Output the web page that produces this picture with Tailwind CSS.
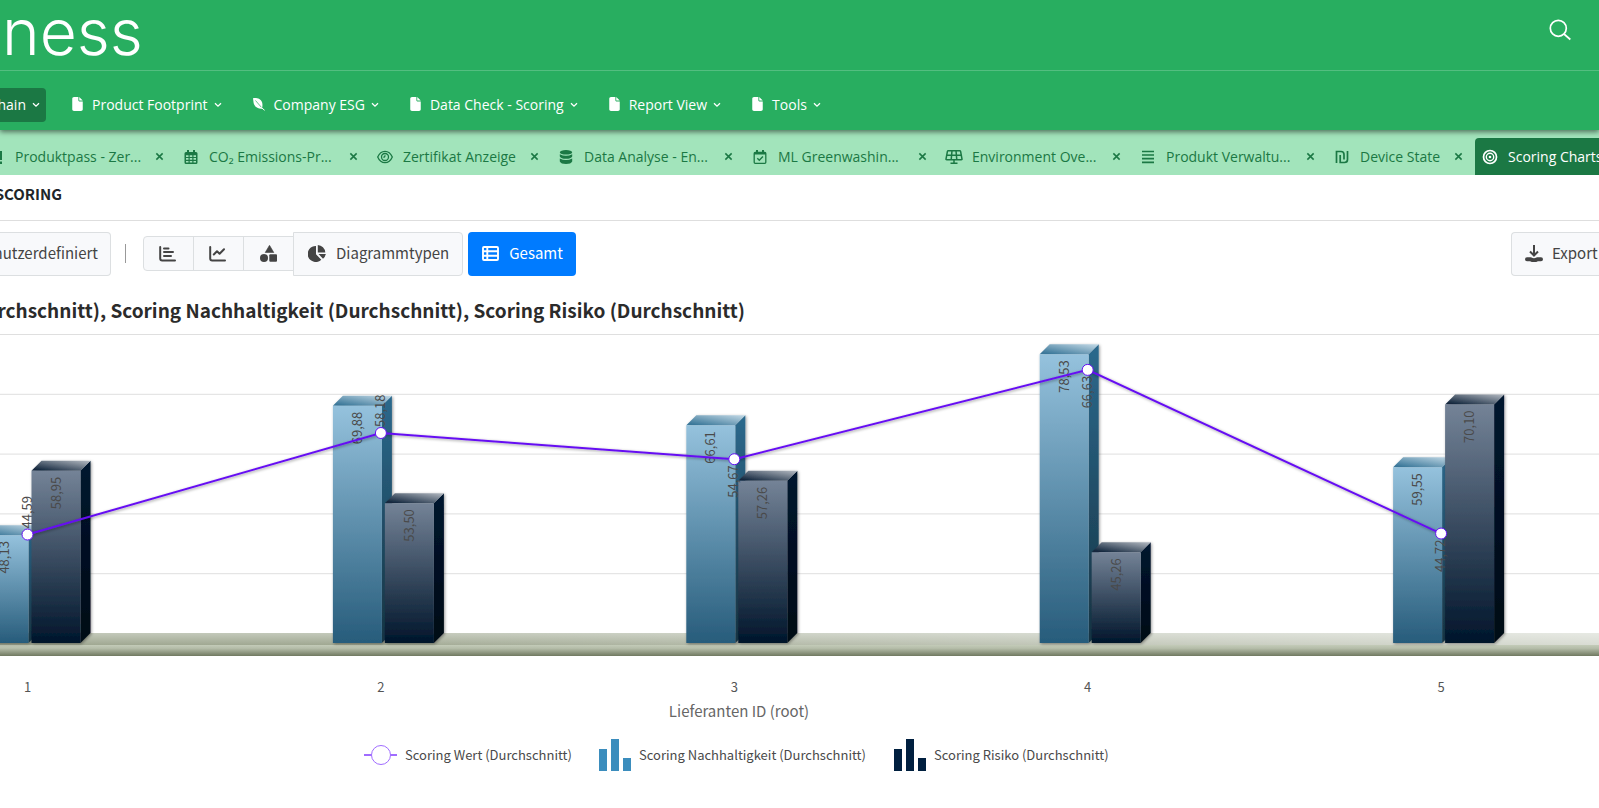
<!DOCTYPE html>
<html lang="de">
  <head>
    <meta charset="UTF-8" />
    <meta name="viewport" content="width=device-width, initial-scale=1.0" />
    <title>Scoring Charts</title>
    <script src="https://cdn.jsdelivr.net/npm/@tailwindcss/browser@4"></script>
  </head>

  <body class="bg-white overflow-x-hidden font-['Noto_Sans_CJK_SC',sans-serif] text-[#444]">
    <!-- Shared icons -->
    <svg class="hidden" aria-hidden="true">
      <symbol id="icon-file" viewBox="0 0 384 512">
        <path d="M0 64C0 29 29 0 64 0h160v128c0 18 14 32 32 32h128v288c0 35-29 64-64 64H64c-35 0-64-29-64-64zM256 0l128 128H256z" />
      </symbol>
      <symbol id="icon-chevron" viewBox="0 0 8 6">
        <path d="M1 1.2l3 3 3-3" fill="none" stroke="currentColor" stroke-width="1.3" />
      </symbol>
      <symbol id="icon-close" viewBox="0 0 10 10">
        <path d="M1.5 1.5l7 7m0-7l-7 7" fill="none" stroke="currentColor" stroke-width="1.7" />
      </symbol>
    </svg>

    <header class="relative z-10 bg-[#28ae60] text-white shadow-[0_2px_5px_rgba(0,0,0,0.5)]">
      <div class="flex items-center justify-between h-[71px] pl-[2px] pr-7 border-b border-[#53be80]">
        <span class="font-['Inter',sans-serif] font-light text-[64px] leading-[64px] pb-[6px]">ness</span>
        <button type="button" aria-label="Suche" class="mb-[10px]">
          <svg class="w-[22px] h-[22px]" viewBox="0 0 22 22" fill="none" stroke="currentColor" stroke-width="1.7">
            <circle cx="9.3" cy="9.3" r="8" />
            <path d="M15 15l6.3 5.5" />
          </svg>
        </button>
      </div>

      <nav class="flex items-center h-[59px] pt-[9px] font-['Open_Sans',sans-serif] text-[14px] leading-5">
        <button type="button" class="flex items-center justify-end gap-[6px] w-[46px] h-[34px] pr-[6px] rounded-r bg-[#1b7844] overflow-hidden">
          Chain
          <svg class="w-2 h-[6px] shrink-0"><use href="#icon-chevron" /></svg>
        </button>
        <button type="button" class="flex items-center ml-[26px]">
          <svg class="w-[11px] h-[14px] mr-[9px] mb-[2px]" fill="currentColor"><use href="#icon-file" /></svg>
          Product Footprint
          <svg class="w-2 h-[6px] ml-[6px]"><use href="#icon-chevron" /></svg>
        </button>
        <button type="button" class="flex items-center ml-[31px]">
          <svg class="w-[12px] h-[13px] mr-[9px] mb-[2px]" viewBox="0 0 12 13">
            <path d="M0 .2c4-.4 8 .4 9.200 4.600.5 2 .2 4.200-.2 6C4.500 10.900 1.200 8.500.6 4.800.4 3.200.2 1.600 0 .2z" fill="currentColor" />
            <path d="M2.500 2.500L9 10" stroke="#28ae60" stroke-width=".7" fill="none" />
            <path d="M8 9.300l3.600 3" stroke="currentColor" stroke-width="1" />
          </svg>
          Company ESG
          <svg class="w-2 h-[6px] ml-[6px]"><use href="#icon-chevron" /></svg>
        </button>
        <button type="button" class="flex items-center ml-[31px]">
          <svg class="w-[11px] h-[14px] mr-[9px] mb-[2px]" fill="currentColor"><use href="#icon-file" /></svg>
          Data Check - Scoring
          <svg class="w-2 h-[6px] ml-[6px]"><use href="#icon-chevron" /></svg>
        </button>
        <button type="button" class="flex items-center ml-[31px]">
          <svg class="w-[11px] h-[14px] mr-[9px] mb-[2px]" fill="currentColor"><use href="#icon-file" /></svg>
          Report View
          <svg class="w-2 h-[6px] ml-[6px]"><use href="#icon-chevron" /></svg>
        </button>
        <button type="button" class="flex items-center ml-[31px]">
          <svg class="w-[11px] h-[14px] mr-[9px] mb-[2px]" fill="currentColor"><use href="#icon-file" /></svg>
          Tools
          <svg class="w-2 h-[6px] ml-[6px]"><use href="#icon-chevron" /></svg>
        </button>
      </nav>
    </header>

    <!-- Open tabs -->
    <div class="flex items-end h-[45px] overflow-hidden bg-[#a2e4bb] text-[#1b7844] font-['Open_Sans',sans-serif] text-[14px] leading-5 whitespace-nowrap">
      <div class="flex items-center shrink-0 h-[37px] pr-3 -ml-[12px]">
        <svg class="w-[18px] h-[14px] mr-[9px]" viewBox="0 0 18 14"><path d="M3 1h11v9H3zM3 11.500h11V14H3z" fill="currentColor" /></svg>
        <span class="w-[125px]">Produktpass - Zer...</span>
        <button type="button" aria-label="Schließen" class="ml-[15px]"><svg class="w-[9px] h-[9px]"><use href="#icon-close" /></svg></button>
      </div>
      <div class="flex items-center shrink-0 h-[37px] pl-[6px] pr-3">
        <svg class="w-[18px] h-[14px] mr-[9px]" viewBox="0 0 18 14">
          <path d="M5 0h2v2h4V0h2v2h1q1.500 0 1.500 1.500V12.500Q15.500 14 14 14H4Q2.500 14 2.500 12.500V3.500Q2.500 2 4 2h1z" fill="currentColor" />
          <path d="M4 5.300h2.500v1.700H4zM7.700 5.300h2.600v1.700H7.700zM11.500 5.300H14v1.700h-2.500zM4 8.100h2.500v1.700H4zM7.700 8.100h2.600v1.700H7.700zM11.500 8.100H14v1.700h-2.500zM4 10.900h2.500v1.600H4zM7.700 10.900h2.600v1.600H7.700zM11.500 10.900H14v1.600h-2.500z" fill="#a2e4bb" />
        </svg>
        <span class="w-[125px]">CO₂ Emissions-Pr...</span>
        <button type="button" aria-label="Schließen" class="ml-[15px]"><svg class="w-[9px] h-[9px]"><use href="#icon-close" /></svg></button>
      </div>
      <div class="flex items-center shrink-0 h-[37px] pl-[6px] pr-3">
        <svg class="w-[18px] h-[14px] mr-[9px]" viewBox="0 0 18 14" fill="none" stroke="currentColor" stroke-width="1.300">
          <path d="M1.700 7C3.300 3.300 6 1.300 9 1.300S14.700 3.300 16.300 7C14.700 10.700 12 12.700 9 12.700S3.300 10.700 1.700 7z" />
          <circle cx="9" cy="7" r="3.500" />
          <path d="M7.300 7.200Q9 7.300 9 5.300" />
        </svg>
        <span>Zertifikat Anzeige</span>
        <button type="button" aria-label="Schließen" class="ml-[14px]"><svg class="w-[9px] h-[9px]"><use href="#icon-close" /></svg></button>
      </div>
      <div class="flex items-center shrink-0 h-[37px] pl-[6px] pr-3">
        <svg class="w-[18px] h-[14px] mr-[9px]" viewBox="0 0 18 14" fill="currentColor">
          <ellipse cx="9" cy="2.300" rx="6.200" ry="2.300" />
          <path d="M2.800 4.200Q9 7.200 15.200 4.200V6.500Q14 8.800 9 8.800T2.800 6.500zM2.800 8.500Q9 11.500 15.200 8.500V11.500Q14 14 9 14T2.800 11.500z" />
        </svg>
        <span class="w-[125px]">Data Analyse - En...</span>
        <button type="button" aria-label="Schließen" class="ml-[15px]"><svg class="w-[9px] h-[9px]"><use href="#icon-close" /></svg></button>
      </div>
      <div class="flex items-center shrink-0 h-[37px] pl-[6px] pr-3">
        <svg class="w-[18px] h-[14px] mr-[9px]" viewBox="0 0 18 14" fill="none" stroke="currentColor">
          <rect x="3.200" y="2.500" width="11.600" height="10.800" rx="1" stroke-width="1.300" />
          <path d="M3 3.500h12M6 0v3M12 0v3" stroke-width="2" />
          <path d="M6.300 8.300l2 2 3.600-3.800" stroke-width="1.400" />
        </svg>
        <span class="w-[125px]">ML Greenwashin...</span>
        <button type="button" aria-label="Schließen" class="ml-[15px]"><svg class="w-[9px] h-[9px]"><use href="#icon-close" /></svg></button>
      </div>
      <div class="flex items-center shrink-0 h-[37px] pl-[6px] pr-3">
        <svg class="w-[18px] h-[14px] mr-[9px]" viewBox="0 0 18 14" fill="none" stroke="currentColor" stroke-width="1.500">
          <path d="M3.200.8h11.600q.6 0 .8.6l1.400 7.600q.1.800-.7.800H1.700q-.8 0-.7-.8L2.400 1.400q.2-.6.800-.6zM1.700 5.200h14.600M7 .8L6.200 9.800M11 .8l.8 9M9 10v3M5.500 13.300h7" />
        </svg>
        <span class="w-[125px]">Environment Ove...</span>
        <button type="button" aria-label="Schließen" class="ml-[15px]"><svg class="w-[9px] h-[9px]"><use href="#icon-close" /></svg></button>
      </div>
      <div class="flex items-center shrink-0 h-[37px] pl-[6px] pr-3">
        <svg class="w-[18px] h-[14px] mr-[9px]" viewBox="0 0 18 14" stroke="currentColor" stroke-width="1.700">
          <path d="M3 1.500h12M3 5h12M3 8.700h12M3 12.300h12" />
        </svg>
        <span class="w-[125px]">Produkt Verwaltu...</span>
        <button type="button" aria-label="Schließen" class="ml-[15px]"><svg class="w-[9px] h-[9px]"><use href="#icon-close" /></svg></button>
      </div>
      <div class="flex items-center shrink-0 h-[37px] pl-[6px] pr-3">
        <svg class="w-[18px] h-[14px] mr-[9px]" viewBox="0 0 18 14" fill="none" stroke="currentColor" stroke-width="1.700">
          <path d="M3.500 13V1.500H8q3 0 3 3V9.500M7.200 5v7.500H11.500q3 0 3-3V1" />
        </svg>
        <span>Device State</span>
        <button type="button" aria-label="Schließen" class="ml-[14px]"><svg class="w-[9px] h-[9px]"><use href="#icon-close" /></svg></button>
      </div>
      <div class="flex items-center shrink-0 h-[37px] pl-[6px] pr-3 rounded-t-[4px] bg-[#1b7844] text-white">
        <svg class="w-[18px] h-[16px] mr-[9px]" viewBox="0 0 18 16" fill="none" stroke="currentColor">
          <circle cx="9" cy="8" r="6.500" stroke-width="1.700" />
          <circle cx="9" cy="8" r="3.700" stroke-width="1.400" />
          <circle cx="9" cy="8" r="1.300" fill="currentColor" stroke="none" />
        </svg>
        <span>Scoring Charts</span>
      </div>
    </div>

    <main>
      <h1 class="h-[46px] pt-[9px] border-b border-[#dedede] text-[15px] leading-5 font-bold text-[#212529]">
        <span class="flex justify-end w-[62px] overflow-hidden">SCORING</span>
      </h1>

      <!-- Toolbar -->
      <div class="flex items-center h-[66px] pb-px text-[15px] leading-6 whitespace-nowrap">
        <button type="button" class="flex items-center justify-end w-[111px] h-[44px] pr-3 pb-px rounded-r border border-l-0 border-[#dcdfe1] bg-[#f8f9fb] overflow-hidden">Benutzerdefiniert</button>
        <div class="w-px h-[19px] ml-[14px] mr-[17px] bg-[#999]"></div>
        <button type="button" aria-label="Balkendiagramm" class="flex items-center justify-center w-[51px] h-[35px] pr-[2px] rounded-l border border-[#dcdfe1] bg-[#f8f9fb]">
          <svg class="w-[17px] h-[16px]" viewBox="0 0 17 16" fill="none" stroke="currentColor" stroke-width="2" stroke-linecap="round">
            <path d="M1.200 1v11.500q0 2 2 2H16M5 2.500h4.500M5 6h9M5 10h7" />
          </svg>
        </button>
        <button type="button" aria-label="Liniendiagramm" class="flex items-center justify-center w-[51px] h-[35px] pr-[2px] -ml-px border border-[#dcdfe1] bg-[#f8f9fb]">
          <svg class="w-[17px] h-[16px]" viewBox="0 0 17 16" fill="none" stroke="currentColor" stroke-width="2" stroke-linecap="round" stroke-linejoin="round">
            <path d="M1.200 1v11.500q0 2 2 2H16M4.800 8.500L8 5.200l2.600 2.500L15 3.200" />
          </svg>
        </button>
        <button type="button" aria-label="Formen" class="flex items-center justify-center w-[51px] h-[35px] -ml-px border border-[#dcdfe1] bg-[#f8f9fb]">
          <svg class="w-[17px] h-[17px]" viewBox="0 0 17 17" fill="currentColor">
            <path d="M9.500 0.300L13.800 7.500H5.200z" stroke="currentColor" stroke-width=".6" stroke-linejoin="round" />
            <circle cx="4" cy="13" r="4" />
            <rect x="9.300" y="9.300" width="7.700" height="7.500" rx="1" />
          </svg>
        </button>
        <button type="button" class="flex items-center gap-[10px] h-[44px] -ml-px pl-[14px] pr-[13px] pb-px rounded-r border border-[#dcdfe1] bg-[#f8f9fb]">
          <svg class="w-[18px] h-[17px]" viewBox="0 0 18 17" fill="currentColor">
            <path d="M8 1V9.300L13.300 14.700A8 8 0 1 1 8 1zM9.800 0A8 8 0 0 1 17.300 7.500H9.800zM10.500 9h7.300A8 8 0 0 1 15 13.800z" />
          </svg>
          Diagrammtypen
        </button>
        <button type="button" class="flex items-center gap-[10px] h-[44px] ml-[5px] pl-[14px] pr-[13px] pb-px rounded bg-[#007bff] text-white">
          <svg class="w-[17px] h-[15px]" viewBox="0 0 17 15" fill="none" stroke="currentColor" stroke-width="1.900">
            <rect x="1" y="1" width="15" height="13" rx="1" />
            <path d="M1 5.300h15M1 9.700h15M5.300 1v13" />
          </svg>
          Gesamt
        </button>
        <button type="button" class="flex items-center gap-[9px] w-[88px] h-[44px] ml-auto pl-[13px] pb-px rounded-l border border-r-0 border-[#dcdfe1] bg-[#f8f9fb]">
          <svg class="w-[18px] h-[17px] shrink-0" viewBox="0 0 18 17" fill="none" stroke="currentColor" stroke-width="2">
            <path d="M9 0v10M5 6.500l4 4 4-4" />
            <path d="M2 14.300h3.500q3.500 2 7 0H16" stroke-width="4" stroke-linecap="round" />
          </svg>
          Export
        </button>
      </div>

      <h2 class="pt-[9px] pb-[2px] text-[19px] leading-7 font-bold text-[#2b2b2b] whitespace-nowrap">
        <span class="flex justify-end w-[745px] overflow-hidden">Scoring Wert (Durchschnitt), Scoring Nachhaltigkeit (Durchschnitt), Scoring Risiko (Durchschnitt)</span>
      </h2>

      <svg id="chart" class="block w-full h-auto" viewBox="0 326 1599 480" font-size="13" fill="#4a4a4a">
        <defs>
          <linearGradient id="blue-front" x1="0" y1="0" x2="0" y2="1"><stop offset="0" stop-color="#95c2dd" /><stop offset="1" stop-color="#275c7b" /></linearGradient>
          <linearGradient id="blue-top" x1="0" y1="1" x2="1" y2="0"><stop offset="0.1" stop-color="#3a7799" /><stop offset="1" stop-color="#c4dae7" /></linearGradient>
          <linearGradient id="blue-side" x1="0" y1="0" x2="0" y2="1"><stop offset="0" stop-color="#2c698d" /><stop offset="1" stop-color="#173443" /></linearGradient>
          <linearGradient id="navy-front" x1="0" y1="0" x2="0" y2="1"><stop offset="0" stop-color="#748397" /><stop offset="1" stop-color="#00152b" /></linearGradient>
          <linearGradient id="navy-top" x1="0" y1="1" x2="1" y2="0"><stop offset="0.1" stop-color="#12263d" /><stop offset="1" stop-color="#b4bac2" /></linearGradient>
          <linearGradient id="navy-side" x1="0" y1="0" x2="0" y2="1"><stop offset="0" stop-color="#00152f" /><stop offset="1" stop-color="#000a15" /></linearGradient>
          <linearGradient id="floor" x1="0" y1="0" x2="0" y2="1"><stop offset="0" stop-color="#c3c9ba" /><stop offset="1" stop-color="#a0a892" /></linearGradient>
          <linearGradient id="floor-fade" x1="0" y1="0" x2="1" y2="0"><stop offset="0.200" stop-color="#fff" stop-opacity="0" /><stop offset="1" stop-color="#fff" stop-opacity="0.600" /></linearGradient>
          <linearGradient id="floor-edge" x1="0" y1="0" x2="0" y2="1"><stop offset="0" stop-color="#c3cbb8" /><stop offset="0.300" stop-color="#b5bda9" /><stop offset="1" stop-color="#707960" /></linearGradient>
          <filter id="shadow" x="-20%" y="-20%" width="140%" height="140%"><feDropShadow dx="1" dy="1" stdDeviation="1.500" flood-opacity="0.400" /></filter>
        </defs>
        <g id="grid" stroke="#dfdfdf"></g>
        <rect y="633" width="1599" height="12" fill="url(#floor)" />
        <rect y="633" width="1599" height="12" fill="url(#floor-fade)" />
        <rect y="645" width="1599" height="11" fill="url(#floor-edge)" />
        <g id="bars"></g>
        <g id="bar-labels"></g>
        <g id="line"></g>
        <g id="axis" text-anchor="middle" fill="#555"></g>
        <text x="739" y="717" text-anchor="middle" font-size="15" fill="#666">Lieferanten ID (root)</text>

        <!-- Legend -->
        <path d="M364 755h33" stroke="#a06cff" stroke-width="2" />
        <circle cx="381" cy="755" r="9.500" fill="#fff" stroke="#a06cff" />
        <text x="405" y="760">Scoring Wert (Durchschnitt)</text>
        <path d="M599 749h8v22h-8zM611 739h8v32h-8zM623 758h8v13h-8z" fill="#3b8dbd" />
        <text x="639" y="760">Scoring Nachhaltigkeit (Durchschnitt)</text>
        <path d="M894 749h8v22h-8zM906 739h8v32h-8zM918 758h8v13h-8z" fill="#001f3f" />
        <text x="934" y="760">Scoring Risiko (Durchschnitt)</text>
      </svg>
    </main>

    <script>
      // below: draw the label of the line point under the marker
      const suppliers = [
        { id: 1, wert: 44.59, nachhaltigkeit: 48.13, risiko: 58.95, below: false },
        { id: 2, wert: 58.18, nachhaltigkeit: 69.88, risiko: 53.5, below: false },
        { id: 3, wert: 54.67, nachhaltigkeit: 66.61, risiko: 57.26, below: true },
        { id: 4, wert: 66.63, nachhaltigkeit: 78.53, risiko: 45.26, below: true },
        { id: 5, wert: 44.72, nachhaltigkeit: 59.55, risiko: 70.1, below: true },
      ];
      const BASE = 643;
      const BAR = 49;
      const DEPTH = 10;
      const barY = (v) => BASE - (v - 30) * 5.95;
      const lineY = (v) => 433 - (v - 58.18) * 7.47;
      const format = (v) => v.toFixed(2).replace(".", ",");

      function bar(x, y, color) {
        const r = x + BAR;
        return `<g filter="url(#shadow)">
          <path d="M${r} ${y}l${DEPTH} ${-DEPTH}V${BASE - DEPTH}L${r} ${BASE}z" fill="url(#${color}-side)"/>
          <path d="M${x} ${y}l${DEPTH} ${-DEPTH}H${r + DEPTH}L${r} ${y}z" fill="url(#${color}-top)"/>
          <path d="M${x} ${y}H${r}V${BASE}H${x}z" fill="url(#${color}-front)"/></g>`;
      }

      function label(x, y, v, anchor) {
        return `<text transform="translate(${x} ${y}) rotate(-90)" text-anchor="${anchor}">${format(v)}</text>`;
      }

      let grid = "";
      for (let i = 0; i < 5; i++) {
        grid += `<path d="M0 ${334.5 + i * 59.8}H1599"/>`;
      }

      let bars = "", labels = "", axis = "", markers = "";
      const points = [];
      suppliers.forEach((s, i) => {
        const x = 27.5 + i * 353.4;
        const yb = barY(s.nachhaltigkeit);
        const yr = barY(s.risiko);
        const yl = lineY(s.wert);
        bars += bar(x - 48, yb, "blue") + bar(x + 4, yr, "navy");
        labels += label(x - 19, yb + 6, s.nachhaltigkeit, "end") + label(x + 33, yr + 6, s.risiko, "end");
        labels += s.below ? label(x + 4, yl + 6, s.wert, "end") : label(x + 4, yl - 6, s.wert, "start");
        points.push(`${x},${yl}`);
        markers += `<circle cx="${x}" cy="${yl}" r="5.5" fill="#fff" stroke="#6610f2"/>`;
        axis += `<text x="${x}" y="692">${s.id}</text>`;
      });

      document.getElementById("grid").innerHTML = grid;
      document.getElementById("bars").innerHTML = bars;
      document.getElementById("bar-labels").innerHTML = labels;
      document.getElementById("line").innerHTML =
        `<polyline points="${points.join(" ")}" fill="none" stroke="#6610f2" stroke-width="2" filter="url(#shadow)"/>` + markers;
      document.getElementById("axis").innerHTML = axis;
    </script>
  </body>
</html>
